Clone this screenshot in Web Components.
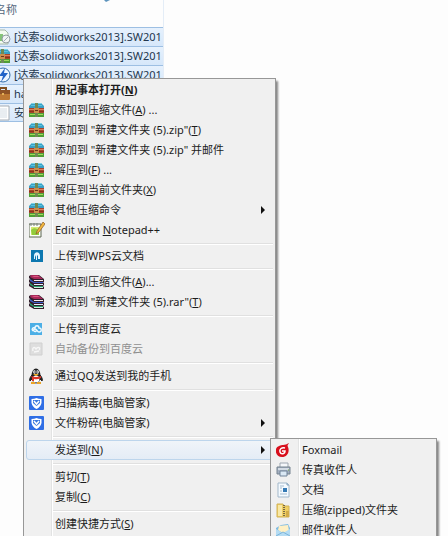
<!DOCTYPE html>
<html lang="zh-CN">
<head>
<meta charset="utf-8">
<title>新建文件夹 (5)</title>
<style>
  html, body { margin: 0; height: 100%; }
  body {
    overflow: hidden;
    background: #fdfdfd;
    color: #1c1c1c;
    font: 11px/20px "Noto Sans", "Noto Sans CJK SC", sans-serif;
  }
</style>
</head>
<body>
<explorer-window>
  <file-list heading="名称">
    <file-row icon="disc">[达索solidworks2013].SW201</file-row>
    <file-row icon="zip">[达索solidworks2013].SW201</file-row>
    <file-row icon="bolt">[达索solidworks2013].SW201</file-row>
    <file-row icon="box">ha</file-row>
    <file-row icon="text">安</file-row>
  </file-list>

  <context-menu slot="menu">
    <menu-item default>用记事本打开(<u>N</u>)</menu-item>
    <menu-item icon="zip">添加到压缩文件(<u>A</u>) ...</menu-item>
    <menu-item icon="zip">添加到 "新建文件夹 (5).zip"(<u>T</u>)</menu-item>
    <menu-item icon="zip">添加到 "新建文件夹 (5).zip" 并邮件</menu-item>
    <menu-item icon="zip">解压到(<u>F</u>) ...</menu-item>
    <menu-item icon="zip">解压到当前文件夹(<u>X</u>)</menu-item>
    <menu-item icon="zip" arrow>其他压缩命令</menu-item>
    <menu-item icon="notepad">Edit with <u>N</u>otepad++</menu-item>
    <menu-separator></menu-separator>
    <menu-item icon="wps" compact>上传到WPS云文档</menu-item>
    <menu-separator></menu-separator>
    <menu-item icon="rar">添加到压缩文件(<u>A</u>)...</menu-item>
    <menu-item icon="rar">添加到 "新建文件夹 (5).rar"(<u>T</u>)</menu-item>
    <menu-separator></menu-separator>
    <menu-item icon="cloud">上传到百度云</menu-item>
    <menu-item icon="backup" disabled>自动备份到百度云</menu-item>
    <menu-separator></menu-separator>
    <menu-item icon="qq">通过QQ发送到我的手机</menu-item>
    <menu-separator></menu-separator>
    <menu-item icon="shield">扫描病毒(电脑管家)</menu-item>
    <menu-item icon="shield" arrow>文件粉碎(电脑管家)</menu-item>
    <menu-separator></menu-separator>
    <menu-item arrow active>发送到(<u>N</u>)
      <context-menu slot="submenu">
        <menu-item icon="foxmail">Foxmail</menu-item>
        <menu-item icon="fax">传真收件人</menu-item>
        <menu-item icon="doc">文档</menu-item>
        <menu-item icon="folder">压缩(zipped)文件夹</menu-item>
        <menu-item icon="mail">邮件收件人</menu-item>
      </context-menu>
    </menu-item>
    <menu-separator></menu-separator>
    <menu-item>剪切(<u>T</u>)</menu-item>
    <menu-item>复制(<u>C</u>)</menu-item>
    <menu-separator></menu-separator>
    <menu-item>创建快捷方式(<u>S</u>)</menu-item>
  </context-menu>
</explorer-window>

<script>
(function () {
  "use strict";

  // 16x16 icons, keyed by name
  const ICONS = {
    zip: `<path d="M3 1h9l3 3v3H0V4z" fill="#3b9fc4"/><path d="M3 1h9l1 1H2z" fill="#7ad3e6"/><path d="M2 3h11v1H2z" fill="#57c3df"/>
      <path d="M0 6h15v5H0z" fill="#a8452a"/><path d="M0 7h15v1H0z" fill="#e0805a"/><path d="M0 9h15v1H0z" fill="#8a351d"/>
      <path d="M0 11h15v4H0z" fill="#4f9e35"/><path d="M1 12h13v1H1z" fill="#9fd95a"/>
      <path d="M6 1h3v5H6zM6 11h3v4H6z" fill="#6f8a55"/>
      <path d="M5 6h5v5H5z" fill="#c98f4c"/><path d="M6 8h3v1H6z" fill="#6d341c"/>`,
    notepad: `<path d="M0 2h12v13H0z" fill="#fdfff8" stroke="#5a6450"/><path d="M2 5h8v8H2z" fill="#d5ea72"/>
      <path d="M2 8c3-3 6-2 8 1v4H3z" fill="#92cc3c"/><path d="M2 1v3M5 1v3M8 1v3" stroke="#79817b"/>
      <path d="M14 0l2 2-6 8-3 2 1-3z" fill="#f3b73c" stroke="#895925" stroke-width=".7"/>`,
    wps: `<path d="M2 2h12v12H2z" fill="#0d78b0"/><path d="M5 8c0-5 6-5 6 0v3H9V8L8 7v5H7V7L6 9v2H5z" fill="#e6f6ff"/>`,
    rar: `<path d="M0 2l2-1h8l5 4v3l-1 0 1 1v2l-1 1 1 1v2H5l-5-3v-2l1-1-1-1V6l1-1-1-1z" fill="#33202c"/>
      <path d="M2 1h7l5 4H5L1 3z" fill="#a8285a"/><path d="M3 2h6l2 1H5z" fill="#d9577f"/><path d="M5 6h9v1H5z" fill="#f5eef2"/>
      <path d="M1 5l4 3h9v1H5L1 7z" fill="#3d62cf"/><path d="M5 10h9v1H5z" fill="#e6f0ff"/>
      <path d="M1 9l4 3h9v1H5l-4-2z" fill="#24a06c"/><path d="M5 13h9v1H5z" fill="#cdeedd"/>`,
    cloud: `<path d="M1 2h12v12H1z" fill="#4cafe6"/><path d="M4 10c-2-2 0-4 2-3 0-3 4-3 4 0 3 0 3 4 0 4-2 0-2-3-4-3-1 0-2 1-1 2s3 0 3-1" fill="none" stroke="#effaff" stroke-width="1.4"/>`,
    backup: `<path d="M1 2h12v12H1z" fill="#dedede" stroke="#d0d0d0"/><path d="M4 10c-1-3 1-5 3-2 2-3 5-1 3 1M5 11l5-1" fill="none" stroke="#f7f7f7" stroke-width="1.4"/>`,
    qq: `<path d="M3 7c-2 2-3 5-2 6l2-2M11 7c2 2 3 5 2 6l-2-2" stroke="#222" fill="#222"/><ellipse cx="7" cy="8" rx="4.600" ry="7.500" fill="#202020"/>
      <ellipse cx="7" cy="11" rx="3.400" ry="3.500" fill="#fff"/><ellipse cx="5.500" cy="4" rx="1.300" ry="1.800" fill="#fff"/><ellipse cx="8.500" cy="4" rx="1.300" ry="1.800" fill="#fff"/>
      <path d="M6 3v2M8 3v2" stroke="#111" stroke-width=".8"/><path d="M4 6h6l-3 2z" fill="#f5b125"/><path d="M2 8q5 2 10 0v2q-4 2-7 1v2H3v-3z" fill="#df3427"/>
      <path d="M2 14h4v2H2zM8 14h4v2H8z" fill="#eda425"/>`,
    shield: `<rect x="0" y="1" width="15" height="14" rx="1" fill="#2f6ee5"/><path d="M7.500 3q2 1 5 1v4q-1 4-5 6-4-2-5-6V4q3 0 5-1z" fill="#fff"/>
      <path d="M4 5h7v3l-3.500 3L4 8z" fill="#3978df"/><path d="M5 6l2.500 3L10 6" fill="none" stroke="#fff" stroke-width="1.500"/>`,
    foxmail: `<path d="M13 1c-1 2-2 2-1 4 2 5-1 10-6 10-5 0-7-5-6-8 1-3 5-4 7-4 2 0 4-1 6-2z" fill="#d80f1c"/><path d="M9 6C6 5 3 7 4 10c1 3 5 2 5-1H6" fill="none" stroke="#fff" stroke-width="1.500"/>`,
    fax: `<path d="M4 1h8v5H4z" fill="#f4f7fa" stroke="#9da6b0"/><path d="M1 5h13v7H1z" fill="#a3afbf" stroke="#75828f"/><path d="M2 6h11v2H2z" fill="#d3dbe4"/>
      <path d="M4 9h7v5H4z" fill="#dae8f4" stroke="#718398"/><path d="M12 8h1" stroke="#6ca63f"/>`,
    doc: `<path d="M2 1h9l2 2v12H2z" fill="#f4faff" stroke="#a3b8ca"/><path d="M11 1v2h2" fill="#c8dced" stroke="#86a2ba"/><path d="M4 4h4M4 6h2M4 9h2M4 12h7" stroke="#a6bbce"/><path d="M7 6h4v4H7z" fill="#357ab5"/>`,
    folder: `<path d="M1 2h6l1 2h5v11H1z" fill="#efcf63" stroke="#d2b256"/><path d="M2 3h4v11H2z" fill="#f9e8a5"/><path d="M8 3v11" stroke="#776846" stroke-width="2" stroke-dasharray="1 1"/><path d="M10 9h3v6h-3z" fill="#d3ac47"/>`,
    mail: `<path d="M0 6l5-3 7-1 2 4v7l-3 2H2l-2-2z" fill="#7fbbe2"/><path d="M3 4l9-1 1 6-5 3-6-4z" fill="#fff0c4"/><path d="M0 7l7 4 7-4v6l-2 2H2l-2-2z" fill="#b5dcf3"/><path d="M0 14l7-4 7 4" fill="none" stroke="#7ab4da"/>`,
    disc: `<path d="M1 1h9l3 3v11H1z" fill="#f4fcf0" stroke="#a7b8a7"/><path d="M2 5h6v7H2z" fill="#85c478"/><circle cx="11" cy="10" r="4" fill="#f2f5f5" stroke="#929da3"/><path d="M9 12l4-4" stroke="#a3b0b7"/>`,
    bolt: `<circle cx="8" cy="8" r="7" fill="#edf6ff" stroke="#316ca8"/><path d="M10 1L4 9h4l-2 6 7-9H9z" fill="#2164c8"/>`,
    box: `<path d="M5 5V2h6v3" fill="none" stroke="#805022" stroke-width="2"/><rect x="0" y="4" width="15" height="10" rx="1" fill="#bd7833"/><path d="M0 4h15v4H0z" fill="#8e5225"/><path d="M7 7h2v2H7z" fill="#e4b258"/>`,
    text: `<path d="M1 1h13v14H1z" fill="#fff" stroke="#a6adb4"/><path d="M3 4h9M3 6h9M3 8h9M3 10h9M3 12h9" stroke="#d3dce4"/>`,
  };

  const svg = (name) =>
    `<svg width="16" height="16" viewBox="0 0 16 16" aria-hidden="true">${ICONS[name] || ""}</svg>`;

  class ExplorerWindow extends HTMLElement {
    constructor() {
      super();
      this.attachShadow({ mode: "open" }).innerHTML = `
        <style>
          :host { display: block; position: relative; height: 100%; overflow: hidden; }
          ::slotted([slot="menu"]) { position: absolute; left: 23px; top: 78px; bottom: -8px; width: 253px; }
        </style>
        <slot></slot>
        <slot name="menu"></slot>`;
    }
  }

  class FileList extends HTMLElement {
    constructor() {
      super();
      this.attachShadow({ mode: "open" }).innerHTML = `
        <style>
          :host { display: block; width: 164px; height: 100%; border-right: 1px solid #e4edf7; box-sizing: border-box; }
          header { display: flex; justify-content: flex-end; height: 27px; color: #53657b; }
          .name { flex: 1; margin-left: -5px; }
          svg { margin-right: 52px; }
        </style>
        <header>
          <span class="name"></span>
          <svg width="8" height="4" viewBox="0 0 8 4" aria-hidden="true"><path d="M1 0h6L3 2z" fill="#5e94bd"/></svg>
        </header>
        <slot></slot>`;
      this.shadowRoot.querySelector(".name").textContent = this.getAttribute("heading");
    }
  }

  class FileRow extends HTMLElement {
    constructor() {
      super();
      this.attachShadow({ mode: "open" }).innerHTML = `
        <style>
          :host {
            display: flex;
            align-items: center;
            gap: 3px;
            box-sizing: border-box;
            height: 19px;
            margin-left: -5px;
            border: solid #9dbfe3;
            border-width: 1px 0 0;
            background: linear-gradient(#e6f1fd, #d6e7fa);
            color: #24374d;
            white-space: nowrap;
          }
          :host(:last-child) { border-bottom-width: 1px; }
          svg { flex: none; }
        </style>
        ${svg(this.getAttribute("icon"))}<span><slot></slot></span>`;
    }
  }

  class ContextMenu extends HTMLElement {
    constructor() {
      super();
      this.attachShadow({ mode: "open" }).innerHTML = `
        <style>
          :host {
            display: block;
            box-sizing: border-box;
            padding: 1px 2px;
            border: 1px solid #979797;
            background: linear-gradient(90deg, transparent 27px, #e2e3e3 27px, #e2e3e3 28px, #fff 28px, #fff 29px, transparent 29px), #f0f0f0;
            box-shadow: 2px 3px 2px #858585;
          }
        </style>
        <slot></slot>`;
    }
    connectedCallback() {
      this.setAttribute("role", "menu");
    }
  }

  class MenuSeparator extends HTMLElement {
    constructor() {
      super();
      this.attachShadow({ mode: "open" }).innerHTML = `
        <style>
          :host { display: block; box-sizing: border-box; height: 7px; padding: 3px 0 2px 27px; }
          div { height: 1px; background: #e0e0e0; border-bottom: 1px solid #fff; }
        </style>
        <div></div>`;
    }
  }

  class MenuItem extends HTMLElement {
    constructor() {
      super();
      const off = this.hasAttribute("disabled") ? "disabled" : "";
      const arrow = this.hasAttribute("arrow")
        ? `<svg width="4" height="8" viewBox="0 0 4 8" aria-hidden="true"><path d="M0 0l4 4-4 4z" fill="#111"/></svg>`
        : "";
      this.attachShadow({ mode: "open" }).innerHTML = `
        <style>
          :host { display: block; position: relative; height: 20px; }
          :host([compact]) { height: 18px; }
          button {
            display: flex;
            align-items: center;
            gap: 10px;
            box-sizing: border-box;
            width: 100%;
            height: 100%;
            padding: 0 7px 0 2px;
            border: 1px solid transparent;
            border-radius: 3px;
            background: none;
            color: inherit;
            font: inherit;
            line-height: 18px;
            text-align: left;
            white-space: nowrap;
          }
          button:disabled { color: #8f8f8f; }
          :host([default]) button { font-weight: 700; }
          :host([active]) button, button:hover:enabled {
            border-color: #bdd5ec;
            background: linear-gradient(#f0f4f9, #e4ecf6);
          }
          svg { flex: none; }
          span { flex: 1; }
          ::slotted([slot="submenu"]) { position: absolute; z-index: 1; left: calc(100% - 3px); top: -2px; width: 167px; }
        </style>
        <button type="button" role="menuitem" ${off}>${svg(this.getAttribute("icon"))}<span><slot></slot></span>${arrow}</button>
        <slot name="submenu"></slot>`;
    }
  }

  customElements.define("explorer-window", ExplorerWindow);
  customElements.define("file-list", FileList);
  customElements.define("file-row", FileRow);
  customElements.define("context-menu", ContextMenu);
  customElements.define("menu-separator", MenuSeparator);
  customElements.define("menu-item", MenuItem);
})();
</script>
</body>
</html>
